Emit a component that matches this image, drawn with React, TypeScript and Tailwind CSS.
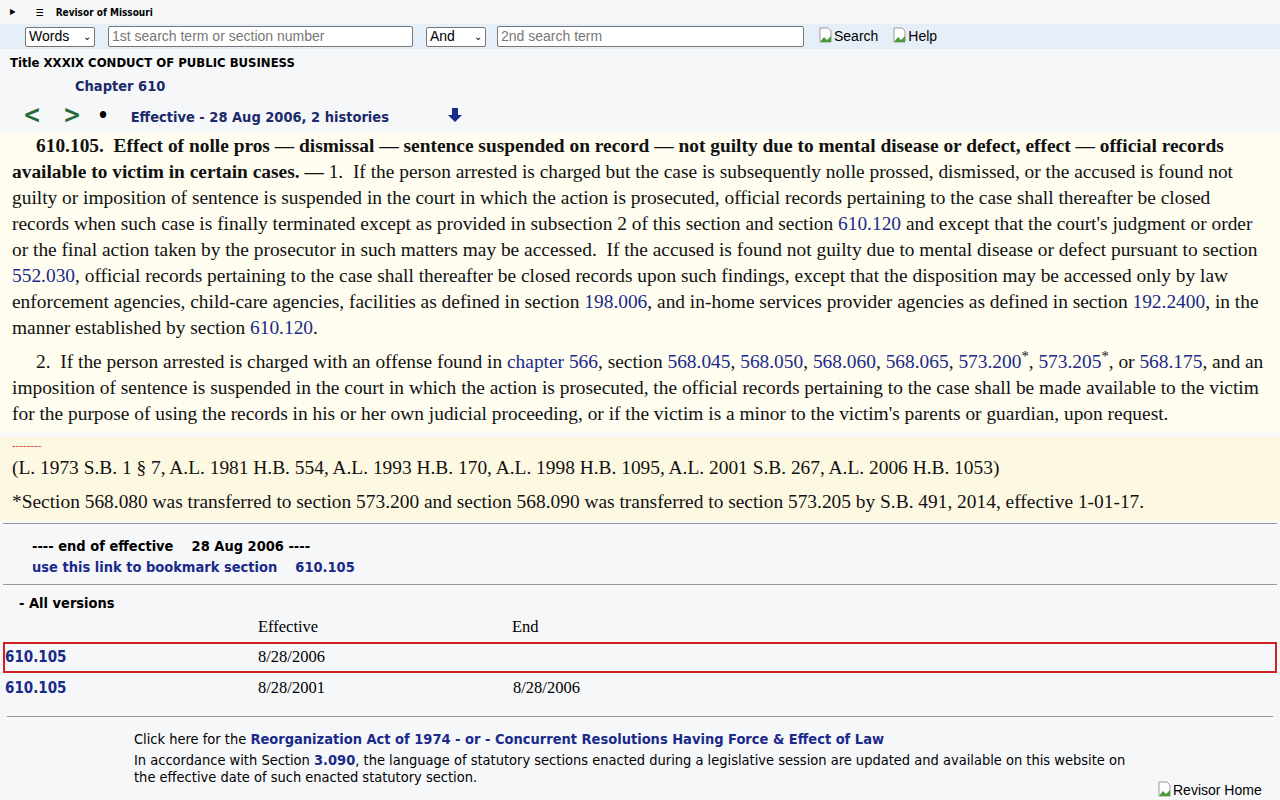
export default function App() {
  const v = { fontFamily: '"DejaVu Sans Condensed", "DejaVu Sans", Tahoma, sans-serif' };
  const s = { fontFamily: '"Liberation Serif", "Times New Roman", serif' };
  const a = { fontFamily: '"Liberation Sans", Arial, sans-serif' };
  const L = ({ children }: { children: React.ReactNode }) => <span className="text-[#1a2a8a]">{children}</span>;
  const Broken = () => (
    <svg width="16" height="16" viewBox="0 0 16 16" className="inline-block align-[-2px]">
      <path d="M2 1h8l3 3v11H2z" fill="#fff" stroke="#999" />
      <path d="M2 15l4-5 3 3 4-4v6z" fill="#4a9a3a" />
    </svg>
  );
  return (
    <div className="w-[1280px] h-[800px] overflow-hidden bg-[#f6f7f9] relative">
      <div className="h-[24px] flex items-center gap-3 pl-[10px] text-[10px] font-bold" style={v}>
        <span className="text-[8px]">▶</span>
        <span className="ml-[8px]">☰</span>
        <span>Revisor of Missouri</span>
      </div>
      <div className="h-[25px] bg-[#e6eef8] flex items-center pl-[25px] text-[14px]" style={a}>
        <div className="w-[70px] h-[20px] border border-[#777] rounded-[2px] bg-white px-[3px] flex items-center justify-between">Words <span className="text-[10px]">⌄</span></div>
        <div className="ml-[13px] w-[305px] h-[21px] border border-[#777] rounded-[2px] bg-white px-[3px] flex items-center text-[#777]">1st search term or section number</div>
        <div className="ml-[13px] w-[60px] h-[20px] border border-[#777] rounded-[2px] bg-white px-[3px] flex items-center justify-between">And <span className="text-[10px]">⌄</span></div>
        <div className="ml-[11px] w-[307px] h-[21px] border border-[#777] rounded-[2px] bg-white px-[3px] flex items-center text-[#777]">2nd search term</div>
        <span className="ml-[14px]"><Broken />Search</span>
        <span className="ml-[14px]"><Broken />Help</span>
      </div>
      <div className="pl-[10px] pt-[4px] text-[13px] font-bold" style={v}>Title XXXIX CONDUCT OF PUBLIC BUSINESS</div>
      <div className="pl-[75px] pt-[3px] text-[14.5px] font-bold text-[#1a2a6a]" style={v}>Chapter 610</div>
      <div className="flex items-center h-[36px] pl-[23px] font-bold" style={v}>
        <span className="text-[#2a6a3a] text-[24px]">&lt;</span>
        <span className="text-[#2a6a3a] text-[24px] ml-[22px]">&gt;</span>
        <span className="text-[20px] ml-[16px]">•</span>
        <span className="text-[14.5px] text-[#1a2a6a] ml-[22px] mt-[6px]">Effective - 28 Aug 2006, 2 histories</span>
        <svg width="16" height="16" viewBox="0 0 16 16" className="ml-[58px]"><path d="M5 1h6v7h4l-7 7-7-7h4z" fill="#1a2a8a" /></svg>
      </div>
      <div className="bg-[#fefdf0] px-[12px] pb-[6px] text-[19.4px] leading-[26px] text-[#111]" style={s}>
        <p className="indent-[24px]"><b>610.105.&nbsp; Effect of nolle pros — dismissal — sentence suspended on record — not guilty due to mental disease or defect, effect — official records available to victim in certain cases. —</b> 1.&nbsp; If the person arrested is charged but the case is subsequently nolle prossed, dismissed, or the accused is found not guilty or imposition of sentence is suspended in the court in which the action is prosecuted, official records pertaining to the case shall thereafter be closed records when such case is finally terminated except as provided in subsection 2 of this section and section <L>610.120</L> and except that the court's judgment or order or the final action taken by the prosecutor in such matters may be accessed.&nbsp; If the accused is found not guilty due to mental disease or defect pursuant to section <L>552.030</L>, official records pertaining to the case shall thereafter be closed records upon such findings, except that the disposition may be accessed only by law enforcement agencies, child-care agencies, facilities as defined in section <L>198.006</L>, and in-home services provider agencies as defined in section <L>192.2400</L>, in the manner established by section <L>610.120</L>.</p>
        <p className="indent-[24px] mt-[8px]">2.&nbsp; If the person arrested is charged with an offense found in <L>chapter 566</L>, section <L>568.045</L>, <L>568.050</L>, <L>568.060</L>, <L>568.065</L>, <L>573.200</L><sup>*</sup>, <L>573.205</L><sup>*</sup>, or <L>568.175</L>, and an imposition of sentence is suspended in the court in which the action is prosecuted, the official records pertaining to the case shall be made available to the victim for the purpose of using the records in his or her own judicial proceeding, or if the victim is a minor to the victim's parents or guardian, upon request.</p>
      </div>
      <div className="bg-[#fdf8e2] px-[12px] pt-[2px] pb-[6px] text-[19.4px] text-[#111] mt-[4px]" style={s}>
        <div className="text-[#c33] text-[11px] leading-[12px]">--------</div>
        <div className="leading-[26px] mt-[4px]">(L. 1973 S.B. 1 § 7, A.L. 1981 H.B. 554, A.L. 1993 H.B. 170, A.L. 1998 H.B. 1095, A.L. 2001 S.B. 267, A.L. 2006 H.B. 1053)</div>
        <div className="leading-[26px] mt-[8px]">*Section 568.080 was transferred to section 573.200 and section 568.090 was transferred to section 573.205 by S.B. 491, 2014, effective 1-01-17.</div>
      </div>
      <div className="border-t border-[#999] mx-[3px] mt-[2px]" />
      <div className="pl-[32px] pt-[12px] text-[14.5px] font-bold leading-[21px]" style={v}>
        <div>---- end of effective &nbsp;&nbsp; 28 Aug 2006 ----</div>
        <div className="text-[#1a2a8a]">use this link to bookmark section &nbsp;&nbsp; 610.105</div>
      </div>
      <div className="border-t border-[#999] mx-[3px] mt-[6px]" />
      <div className="pl-[19px] pt-[8px] text-[14.5px] font-bold" style={v}>- All versions</div>
      <div className="text-[16.5px]" style={s}>
        <div className="flex h-[24px] items-center"><span className="w-[258px]" /><span className="w-[254px]">Effective</span><span>End</span></div>
        <div className="flex h-[31px] items-center border-2 border-[#d02020] mx-[3px] mt-[3px]"><span className="w-[253px] font-bold text-[#1a2a8a] text-[15px]" style={v}>610.105</span><span className="w-[254px]">8/28/2006</span></div>
        <div className="flex h-[31px] items-center pl-[5px]"><span className="w-[253px] font-bold text-[#1a2a8a] text-[15px]" style={v}>610.105</span><span className="w-[255px]">8/28/2001</span><span>8/28/2006</span></div>
      </div>
      <div className="border-t border-[#999] mx-[7px] mt-[12px]" />
      <div className="pl-[134px] pr-[130px] pt-[12px] text-[14.5px] leading-[21px]" style={v}>
        <div>Click here for the <b className="text-[#1a2a8a]">Reorganization Act of 1974 - or - Concurrent Resolutions Having Force &amp; Effect of Law</b></div>
        <div className="leading-[17px] mt-[2px]">In accordance with Section <b className="text-[#1a2a8a]">3.090</b>, the language of statutory sections enacted during a legislative session are updated and available on this website on the effective date of such enacted statutory section.</div>
      </div>
      <div className="absolute left-[1157px] top-[780px] text-[14px]" style={a}><Broken />Revisor Home</div>
    </div>
  );
}
